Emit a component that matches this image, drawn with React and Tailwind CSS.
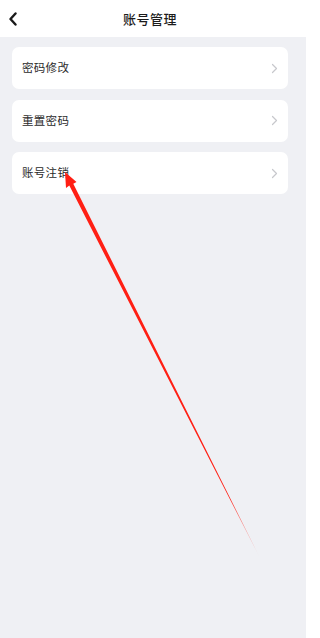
import React from "react";

const items = ["密码修改", "重置密码", "账号注销"];

function ChevronRight() {
  return (
    <svg width="7" height="11" viewBox="0 0 7 11" fill="none">
      <path d="M1.5 1.5 L5.5 5.5 L1.5 9.5" stroke="#c7c8cc" strokeWidth="1.2" strokeLinecap="round" strokeLinejoin="round" />
    </svg>
  );
}

export default function App() {
  return (
    <div
      className="relative min-h-[638px] w-[306px] bg-[#eff0f4] overflow-hidden"
      style={{ fontFamily: '"Noto Sans CJK SC", "Noto Sans", sans-serif' }}
    >
      {/* Header */}
      <div className="h-[37px] bg-white flex items-center w-[300px] relative">
        <div className="pl-[8px] flex items-center">
          <svg width="10" height="14" viewBox="0 0 10 14" fill="none">
            <path d="M7.5 1.5 L2.5 7 L7.5 12.5" stroke="#1a1a1a" strokeWidth="2.4" strokeLinecap="round" strokeLinejoin="round" />
          </svg>
        </div>
        <div className="absolute inset-0 flex items-center justify-center text-[13px] text-[#1c1c1c] font-medium tracking-[0.5px]">
          账号管理
        </div>
      </div>
      <div className="absolute top-0 right-0 w-[6px] h-[37px] bg-white" />

      {/* List */}
      <div className="pl-[12px] pt-[10px] flex flex-col gap-[10.5px] w-[288px]">
        {items.map((t) => (
          <div key={t} className="h-[42px] bg-white rounded-[7px] flex items-center justify-between pl-[10px] pr-[10px]">
            <span className="text-[11.5px] text-[#2b2b2b] tracking-[0.3px]">{t}</span>
            <ChevronRight />
          </div>
        ))}
      </div>

      {/* Annotation arrow */}
      <svg className="absolute left-0 top-0 pointer-events-none" width="306" height="638" viewBox="0 0 306 638">
        <defs>
          <linearGradient id="fade" gradientUnits="userSpaceOnUse" x1="65" y1="172" x2="260" y2="558">
            <stop offset="0" stopColor="#ff1f14" />
            <stop offset="0.85" stopColor="#ff1f14" />
            <stop offset="1" stopColor="#ff1f14" stopOpacity="0.1" />
          </linearGradient>
        </defs>
        <polygon
          points="65,172 76.5,182 73.3,183.7 260,558 69.3,185.6 66,188"
          fill="url(#fade)"
        />
      </svg>
    </div>
  );
}
